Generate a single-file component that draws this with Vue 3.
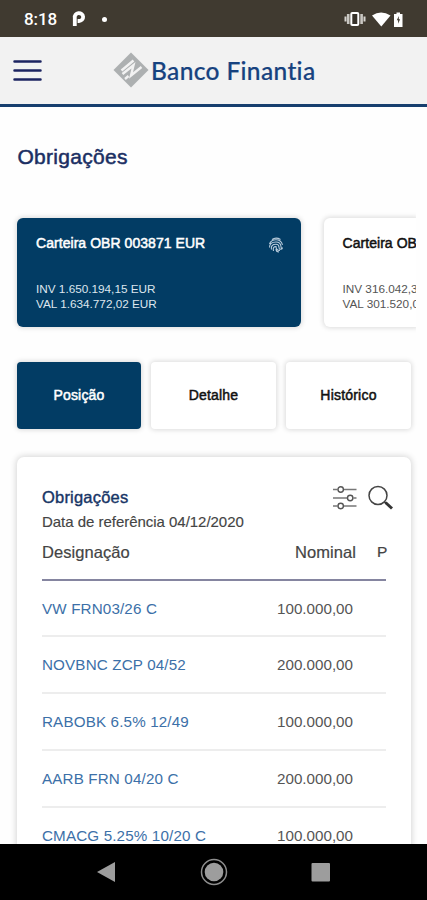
<script setup>
const portfolios = [
  { name: 'Carteira OBR 003871 EUR', inv: 'INV 1.650.194,15 EUR', val: 'VAL 1.634.772,02 EUR', active: true },
  { name: 'Carteira OB', inv: 'INV 316.042,3', val: 'VAL 301.520,0', active: false },
]
const tabs = ['Posição', 'Detalhe', 'Histórico']
const rows = [
  { name: 'VW FRN03/26 C', nominal: '100.000,00' },
  { name: 'NOVBNC ZCP 04/52', nominal: '200.000,00' },
  { name: 'RABOBK 6.5% 12/49', nominal: '100.000,00' },
  { name: 'AARB FRN 04/20 C', nominal: '200.000,00' },
  { name: 'CMACG 5.25% 10/20 C', nominal: '100.000,00' },
]
</script>

<template>
  <div class="screen">
    <div class="status">
      <span class="time">8:18</span>
      <svg class="p-icon" width="14" height="16" viewBox="0 0 14 16">
        <path d="M2.800 15V6.800A4.200 3.900 0 1 1 7 10H5.600" fill="none" stroke="#fff" stroke-width="3.800" />
      </svg>
      <span class="dot"></span>
      <svg class="sys" width="62" height="18" viewBox="0 0 62 18">
        <path d="M1.500 6.500v5M20.500 6.500v5" stroke="#d5d3cf" stroke-width="2" />
        <path d="M4.200 4v10M17.600 4v10" stroke="#c9c7c2" stroke-width="2.600" />
        <rect x="7.300" y="3" width="7" height="12" rx="1" fill="#37322a" stroke="#fff" stroke-width="2" />
        <path d="M28 5.500q9-6 18.500 0L37.300 16.500z" fill="#fff" />
        <path d="M50 4h2.500V2.500h3.500V4h2.500v13H50z" fill="#fff" />
        <path d="M54.800 6l-2 4.300h1.300v3.500l2-4.600h-1.300z" fill="#403a30" />
      </svg>
    </div>

    <header class="bar">
      <svg class="menu" width="29" height="23" viewBox="0 0 29 23">
        <path d="M1.500 2.500h26M1.500 11.500h26M1.500 20.500h26" stroke="#1c2461" stroke-width="2.500" stroke-linecap="round" />
      </svg>
      <div class="brand">
        <svg width="36" height="36" viewBox="0 0 36 36">
          <path d="M18 .5L35.500 18 18 35.500.5 18z" fill="#adb0b1" />
          <path d="M20.500 8.500L8.500 18.500M9.500 22l11-8.800-2.500 10.300 10.500-8.500M12 27l3.500-3" fill="none" stroke="#f2f2f2" stroke-width="2.400" />
        </svg>
        <span class="brand-name">Banco Finantia</span>
      </div>
    </header>

    <main class="content">
      <h1 class="title">Obrigações</h1>

      <div class="carousel">
        <article v-for="p in portfolios" :key="p.name" class="portfolio" :class="{ active: p.active }">
          <div class="portfolio-head">
            <span class="portfolio-name">{{ p.name }}</span>
            <svg v-if="p.active" class="finger" width="16" height="16" viewBox="0 0 16 16" fill="none" stroke="#b9ccdc" stroke-width="1.100">
              <path d="M4 2.500Q8-.3 12.500 2.500M1.500 7Q3 2.800 8 2.800t6.500 5M1.500 10.500Q1.500 5 8 5q4.500 0 5 4.500t1.500 1M3.500 12.500Q2.500 7.300 8 7.300q3 0 3 3t3 1.500M5.500 14Q4.500 9.500 8 9.500q0 4 4 4M8 12q0 3 3 3" />
            </svg>
          </div>
          <div class="amounts">
            <div>{{ p.inv }}</div>
            <div>{{ p.val }}</div>
          </div>
        </article>
      </div>

      <nav class="tabs">
        <button v-for="(t, i) in tabs" :key="t" class="tab" :class="{ active: i === 0 }">{{ t }}</button>
      </nav>

      <section class="panel">
        <div class="panel-head">
          <h2 class="panel-title">Obrigações</h2>
          <svg class="tools" width="62" height="28" viewBox="0 0 62 28" fill="none" stroke="#555" stroke-width="1.400">
            <path d="M1 5.500h4.500M12 5.500h12.500M1 14h14M21.500 14h3M1 22h4.500M12 22h12.500" stroke="#777" />
            <circle cx="8.700" cy="5.500" r="2.700" />
            <circle cx="18.200" cy="14" r="2.700" />
            <circle cx="8.700" cy="22" r="2.700" />
            <circle cx="46" cy="11.500" r="9" stroke="#444" stroke-width="1.500" />
            <path d="M52.500 18l2 1.500" stroke="#333" stroke-width="1.500" />
            <path d="M53.500 18.500l6.500 6" stroke="#333" stroke-width="3" />
          </svg>
        </div>
        <div class="date">Data de referência 04/12/2020</div>
        <div class="table-head">
          <span class="col-name">Designação</span>
          <span class="col-nominal">Nominal</span>
          <span class="col-next">P</span>
        </div>
        <div v-for="r in rows" :key="r.name" class="row">
          <span class="row-name">{{ r.name }}</span>
          <span class="row-value">{{ r.nominal }}</span>
        </div>
      </section>
    </main>

    <footer class="navbar">
      <svg width="427" height="56" viewBox="0 0 427 56">
        <path d="M97 28l18-10v20z" fill="#9d9d9d" />
        <circle cx="214" cy="28" r="12.500" fill="none" stroke="#8e8e8e" stroke-width="1.500" />
        <circle cx="214" cy="28" r="9.300" fill="#9d9d9d" />
        <rect x="311.500" y="19" width="18.500" height="18.500" rx="1" fill="#9d9d9d" />
      </svg>
    </footer>
  </div>
</template>

<style>
body {
  margin: 0;
  background: #fff;
}
</style>

<style scoped>
* {
  box-sizing: border-box;
}
.screen {
  width: 427px;
  height: 900px;
  display: flex;
  flex-direction: column;
  overflow: hidden;
  background: #fefefe;
  font-family: "Liberation Sans", Arial, sans-serif;
}
.status {
  flex: none;
  height: 37px;
  display: flex;
  align-items: center;
  padding: 1px 21px 0 24px;
  background: #403a30;
  color: #fff;
}
.time {
  width: 34px;
  font: 500 17px/20px Roboto, sans-serif;
  letter-spacing: -0.1px;
}
.p-icon {
  margin-left: 14px;
}
.dot {
  width: 5px;
  height: 5px;
  margin-left: 16px;
  border-radius: 50%;
  background: #fff;
}
.sys {
  margin-left: auto;
}
.bar {
  flex: none;
  height: 70px;
  display: flex;
  align-items: center;
  padding: 0 0 1px 13px;
  background: #f2f2f2;
  border-bottom: 3px solid #173f6e;
}
.brand {
  display: flex;
  align-items: center;
  margin-left: 71px;
}
.brand-name {
  margin-left: 2px;
  padding-top: 1px;
  font: 500 24.500px/30px Lato, sans-serif;
  letter-spacing: 0.35px;
  color: #17427f;
  -webkit-text-stroke: 0.2px #17427f;
  white-space: nowrap;
}
.content {
  flex: 1;
  min-height: 0;
  overflow: hidden;
  padding: 37px 0 0 17.500px;
}
.title {
  margin: 0;
  font-size: 21px;
  line-height: 26px;
  font-weight: 400;
  letter-spacing: 0.28px;
  color: #1b2f63;
  -webkit-text-stroke: 0.5px #1b2f63;
}
.carousel {
  width: 403.500px;
  height: 124px;
  margin: 40.500px 0 0 -5.500px;
  padding: 7.500px 5px;
  display: flex;
  gap: 22.500px;
  overflow: hidden;
}
.portfolio {
  flex: none;
  width: 284px;
  height: 109px;
  padding: 15.500px 17px 0 19px;
  border-radius: 6px;
  background: #fff;
  color: #111;
  box-shadow: 0 0 5px 1px rgba(0, 0, 0, 0.14);
}
.portfolio:last-child {
  width: 93px;
  margin-right: -5px;
  padding-right: 0;
  border-radius: 6px 0 0 6px;
}
.portfolio.active {
  background: #023c64;
  color: #fff;
}
.portfolio-head {
  display: flex;
  align-items: center;
  justify-content: space-between;
  height: 18px;
}
.portfolio-name {
  font-size: 14px;
  line-height: 18px;
  letter-spacing: 0.05px;
  white-space: nowrap;
  -webkit-text-stroke: 0.5px currentColor;
}
.finger {
  position: relative;
  top: 2px;
}
.amounts {
  margin-top: 30.500px;
  font-size: 11.750px;
  line-height: 14.500px;
  color: #555;
  white-space: nowrap;
}
.active .amounts {
  color: #dde6ee;
}
.tabs {
  display: grid;
  grid-template-columns: 124px 125px 125px;
  gap: 10px;
  margin: 27px 0 0 -0.500px;
}
.tab {
  height: 67px;
  padding: 0;
  border: 0;
  border-radius: 4px;
  background: #fff;
  color: #111;
  font-family: inherit;
  font-size: 14px;
  line-height: 17px;
  letter-spacing: 0.2px;
  -webkit-text-stroke: 0.5px currentColor;
  box-shadow: 0 0 5px 1px rgba(0, 0, 0, 0.14);
}
.tab.active {
  background: #023c64;
  color: #fff;
}
.panel {
  width: 394px;
  height: 420px;
  margin: 28px 0 0 -0.500px;
  padding: 28px 25px 0;
  border-radius: 7px;
  background: #fff;
  box-shadow: 0 0 6px 1px rgba(0, 0, 0, 0.16);
}
.panel-head {
  display: flex;
  justify-content: space-between;
  height: 27px;
}
.panel-title {
  margin: 0;
  padding-top: 1px;
  font-size: 16.500px;
  line-height: 22px;
  font-weight: 400;
  letter-spacing: 0.2px;
  color: #173566;
  -webkit-text-stroke: 0.4px currentColor;
}
.tools {
  margin: -1px -7.500px 0 0;
}
.date {
  font-size: 15px;
  line-height: 20px;
  letter-spacing: -0.03px;
  color: #444;
  -webkit-text-stroke: 0.15px currentColor;
}
.table-head {
  display: flex;
  height: 49px;
  padding-top: 10px;
  border-bottom: 2px solid #8585a0;
  color: #444;
  font-size: 16.500px;
  line-height: 20px;
  -webkit-text-stroke: 0.2px currentColor;
}
.col-name {
  width: 253px;
  letter-spacing: 0.05px;
}
.col-nominal {
  width: 82px;
  letter-spacing: 0.08px;
}
.col-next {
  width: 9px;
  font-size: 15.500px;
}
.row {
  display: flex;
  justify-content: space-between;
  height: 56.800px;
  padding: 0 33px 0 0;
  border-bottom: 2px solid #ededed;
  font-size: 15.200px;
  line-height: 56px;
  white-space: nowrap;
}
.row-name {
  color: #3c70a8;
  letter-spacing: 0.15px;
}
.row-value {
  color: #555;
}
.navbar {
  flex: none;
  height: 56px;
  background: #000;
}
.navbar svg {
  display: block;
}
</style>
